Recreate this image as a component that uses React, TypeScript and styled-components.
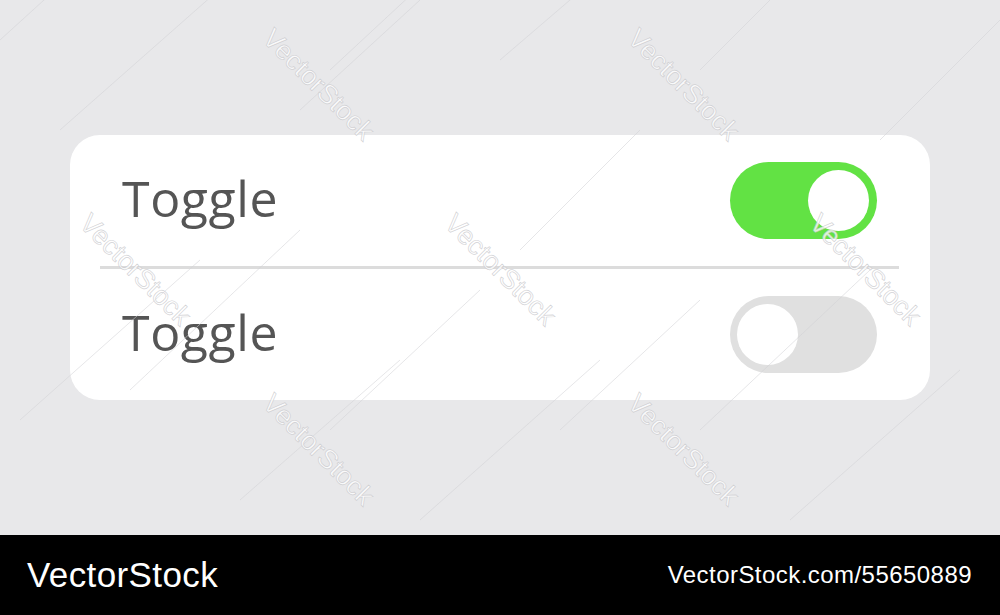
import React from 'react';
import styled, { createGlobalStyle } from 'styled-components';

const GlobalStyle = createGlobalStyle`
  html, body {
    margin: 0;
    padding: 0;
    width: 1000px;
    height: 615px;
    overflow: hidden;
    background: #e8e8ea;
  }
`;

const rows = [
  { id: 1, label: 'Toggle', on: true },
  { id: 2, label: 'Toggle', on: false },
];

const marks = [
  { x: 318, y: 85 },
  { x: 683, y: 85 },
  { x: 135, y: 270 },
  { x: 500, y: 270 },
  { x: 865, y: 270 },
  { x: 318, y: 450 },
  { x: 683, y: 450 },
];

const streaks = [
  [0, 40, 110, -60],
  [60, 130, 230, -20],
  [300, 110, 420, 0],
  [330, 70, 470, -60],
  [500, 60, 640, -60],
  [700, 70, 830, -60],
  [880, 140, 1000, 20],
  [20, 420, 200, 260],
  [240, 500, 400, 360],
  [330, 430, 480, 290],
  [420, 520, 600, 360],
  [560, 430, 700, 300],
  [700, 430, 870, 270],
  [790, 520, 960, 370],
  [520, 250, 640, 130],
  [130, 390, 300, 230],
];

const App = () => {
  return (
    <Page>
      <GlobalStyle />
      <Stage>
        <Card>
          {rows.map(({ id, label, on }, index) => (
            <React.Fragment key={id}>
              {index > 0 && <Divider />}
              <Row>
                <Label>{label}</Label>
                <Switch $on={on}>
                  <Knob $on={on} />
                </Switch>
              </Row>
            </React.Fragment>
          ))}
        </Card>
        <Overlay width="1000" height="535" viewBox="0 0 1000 535">
          {streaks.map(([x1, y1, x2, y2], index) => (
            <line
              key={index}
              x1={x1}
              y1={y1}
              x2={x2}
              y2={y2}
              stroke="#d2d2d6"
              strokeOpacity="0.55"
              strokeWidth="1"
            />
          ))}
        </Overlay>
        {marks.map(({ x, y }, index) => (
          <Mark key={index} style={{ left: x, top: y }}>
            VectorStock
          </Mark>
        ))}
      </Stage>
      <Footer>
        <Brand>VectorStock</Brand>
        <ImageId>VectorStock.com/55650889</ImageId>
      </Footer>
    </Page>
  );
};

const Page = styled.div`
  display: flex;
  flex-direction: column;
  width: 1000px;
  height: 615px;
`;

const Stage = styled.div`
  position: relative;
  height: 535px;
  display: flex;
  align-items: center;
  justify-content: center;
  background: #e8e8ea;
  overflow: hidden;
`;

const Card = styled.div`
  width: 860px;
  height: 265px;
  background: #fff;
  border-radius: 30px;
  display: flex;
  flex-direction: column;
`;

const Row = styled.div`
  flex: 1;
  display: flex;
  align-items: center;
  justify-content: space-between;
  padding: 0 53px 0 52px;
`;

const Divider = styled.div`
  height: 3px;
  margin: 0 31px 0 30px;
  background: #dcdcdc;
`;

const Label = styled.span`
  font-family: 'Open Sans', 'Noto Sans', sans-serif;
  font-size: 50px;
  line-height: 1;
  color: #555555;
  letter-spacing: 0.6px;
  margin-bottom: 6px;
`;

const Switch = styled.div<{ $on: boolean }>`
  width: 147px;
  height: 77px;
  border-radius: 39px;
  padding: 8px;
  box-sizing: border-box;
  display: flex;
  justify-content: ${({ $on }) => ($on ? 'flex-end' : 'flex-start')};
  background: ${({ $on }) => ($on ? '#62e244' : '#e0e0e0')};
`;

const Knob = styled.div<{ $on: boolean }>`
  width: 61px;
  height: 61px;
  border-radius: 50%;
  background: #fff;
  margin-left: ${({ $on }) => ($on ? '0' : '-1px')};
`;

const Overlay = styled.svg`
  position: absolute;
  left: 0;
  top: 0;
  pointer-events: none;
`;

const Mark = styled.span`
  position: absolute;
  transform: translate(-50%, -50%) rotate(45deg);
  font-family: 'Liberation Sans', Arial, sans-serif;
  font-size: 27px;
  color: rgba(255, 255, 255, 0.8);
  -webkit-text-stroke: 0.7px rgba(196, 196, 200, 0.75);
  white-space: nowrap;
  pointer-events: none;
`;

const Footer = styled.div`
  height: 80px;
  background: #000;
  display: flex;
  align-items: center;
  justify-content: space-between;
  padding: 0 28px 0 27px;
  color: #fff;
  font-family: 'Liberation Sans', Arial, sans-serif;
`;

const Brand = styled.span`
  font-size: 35px;
  letter-spacing: 0.4px;
`;

const ImageId = styled.span`
  font-size: 24px;
  letter-spacing: 0.45px;
`;

export default App;
